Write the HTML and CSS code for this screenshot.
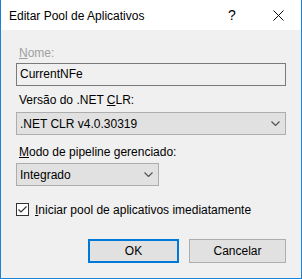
FILE: index.html
```
<!DOCTYPE html>
<html lang="pt-BR">
<head>
    <meta charset="UTF-8">
    <title>Editar Pool de Aplicativos</title>
    <link rel="stylesheet" href="styles.css">
</head>
<body>
    <div class="window">
        <div class="titlebar">
            <span class="title">Editar Pool de Aplicativos</span>
            <span class="help">?</span>
            <span class="close">
                <svg width="11" height="11" viewBox="0 0 11 11">
                    <path d="M0.5 0.5 L10.5 10.5 M10.5 0.5 L0.5 10.5" stroke="#111" stroke-width="1" fill="none"/>
                </svg>
            </span>
        </div>

        <div class="content">
            <!-- Nome -->
            <div class="label label-name disabled"><u>N</u>ome:</div>
            <div class="textbox">CurrentNFe</div>

            <!-- CLR -->
            <div class="label label-clr">Versão do .NET <u>C</u>LR:</div>
            <div class="combo combo-wide">
                <span>.NET CLR v4.0.30319</span>
                <svg class="chevron" width="9" height="5" viewBox="0 0 9 5">
                    <path d="M0.5 0.5 L4.5 4.5 L8.5 0.5" stroke="#555" stroke-width="1.2" fill="none"/>
                </svg>
            </div>

            <!-- Pipeline -->
            <div class="label label-mode"><u>M</u>odo de pipeline gerenciado:</div>
            <div class="combo combo-small">
                <span>Integrado</span>
                <svg class="chevron" width="9" height="5" viewBox="0 0 9 5">
                    <path d="M0.5 0.5 L4.5 4.5 L8.5 0.5" stroke="#555" stroke-width="1.2" fill="none"/>
                </svg>
            </div>

            <!-- Start now -->
            <label class="check-row">
                <span class="checkbox">
                    <svg width="11" height="11" viewBox="0 0 11 11">
                        <path d="M1.5 5.5 L4 8 L9.5 2.5" stroke="#333" stroke-width="1.2" fill="none"/>
                    </svg>
                </span>
                <span><u>I</u>niciar pool de aplicativos imediatamente</span>
            </label>

            <div class="buttons">
                <button class="btn btn-ok">OK</button>
                <button class="btn btn-cancel">Cancelar</button>
            </div>
        </div>
    </div>
</body>
</html>
```

FILE: styles.css
```
/* General styles */
body {
    margin: 0;
    padding: 0;
    font-family: "Liberation Sans", Arial, sans-serif;
    font-size: 12px;
    color: #000;
}

.window {
    width: 302px;
    height: 279px;
    box-sizing: border-box;
    border: 1px solid #1883d7;
    border-top: none;
    background-color: #f0f0f0;
}

/* Title bar */
.titlebar {
    height: 30px;
    background-color: #fff;
    display: flex;
    align-items: center;
    padding-left: 8px;
}

.title {
    flex: 1;
    font-size: 12px;
    padding-top: 1px;
}

.help {
    width: 12px;
    font-size: 14px;
    margin-right: 33px;
}

.close {
    display: flex;
    margin-right: 17px;
}

/* Form */
.content {
    padding: 16px 15px 0 15px;
}

.label {
    line-height: 15px;
    padding-left: 3px;
}

.disabled {
    color: #a0a0a0;
}

.label-clr {
    margin-top: 7px;
}

.label-mode {
    margin-top: 10px;
}

.textbox {
    margin-top: 2px;
    height: 23px;
    box-sizing: border-box;
    border: 1px solid #7a7a7a;
    padding-left: 3px;
    line-height: 21px;
}

.combo {
    height: 23px;
    box-sizing: border-box;
    border: 1px solid #adadad;
    background-color: #e1e1e1;
    display: flex;
    align-items: center;
    justify-content: space-between;
    padding: 0 5px 0 3px;
}

.combo-wide {
    margin-top: 4px;
}

.combo-small {
    margin-top: 3px;
    width: 143px;
}

.chevron {
    margin-right: 0;
}

.check-row {
    display: flex;
    align-items: center;
    gap: 6px;
    margin-top: 17px;
    height: 13px;
}

.checkbox {
    width: 13px;
    height: 13px;
    box-sizing: border-box;
    border: 1px solid #333;
    background-color: #fff;
    display: flex;
}

/* Buttons */
.buttons {
    display: flex;
    justify-content: flex-end;
    gap: 10px;
    margin-top: 23px;
}

.btn {
    height: 24px;
    font-family: inherit;
    font-size: 12px;
    background-color: #e1e1e1;
    border: 1px solid #adadad;
    padding: 0;
    color: #000;
}

.btn-ok {
    width: 91px;
    border: 2px solid #0078d7;
}

.btn-cancel {
    width: 97px;
}
```
